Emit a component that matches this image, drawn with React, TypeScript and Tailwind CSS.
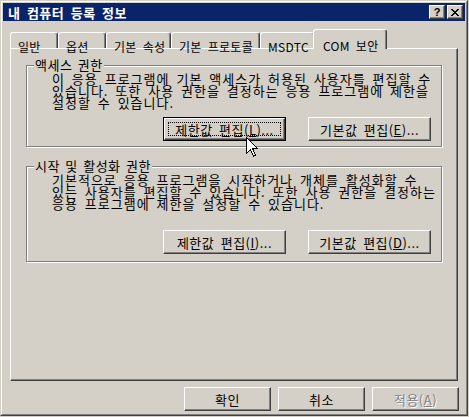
import React from "react";

// classic 3D raised button
const Btn: React.FC<{ children: React.ReactNode; className?: string; primary?: boolean; disabled?: boolean }> = ({
  children,
  className = "",
  primary,
  disabled,
}) => {
  const face = (
    <div className="relative flex h-full w-full items-center justify-center border-t border-l border-r border-b border-t-white border-l-white border-r-[#404040] border-b-[#404040] bg-[#d4d0c8] shadow-[inset_-1px_-1px_0_#808080]">
      <span
        className={
          disabled
            ? "text-[13px] leading-none tracking-[0.5px] text-[#808080] [text-shadow:1px_1px_0_#fff] [word-spacing:3px]"
            : "text-[13px] leading-none tracking-[0.5px] text-black [word-spacing:3px]"
        }
      >
        {children}
      </span>
      {primary && <div className="absolute inset-[3px] border border-dotted border-black" />}
    </div>
  );
  return <div className={`${className} ${primary ? "border border-black" : ""}`}>{face}</div>;
};

const Tab: React.FC<{ label: string; className: string; active?: boolean }> = ({ label, className, active }) => (
  <div
    className={
      active
        ? `${className} relative -ml-[2px] -mb-px h-[20px] rounded-t-[3px] border-t border-l border-r border-t-white border-l-white border-r-[#404040] bg-[#d4d0c8] pt-[2px] pl-[9px] shadow-[inset_-1px_0_0_#808080]`
        : `${className} h-[16px] rounded-t-[3px] border-t border-l border-r border-t-white border-l-white border-r-[#404040] bg-[#d4d0c8] pl-[7px] shadow-[inset_-1px_0_0_#808080]`
    }
  >
    <span className="whitespace-nowrap text-[12px] leading-[14px] tracking-[0.3px] text-black [word-spacing:3px]">{label}</span>
  </div>
);

const GroupBox: React.FC<{ title: string; className: string; children: React.ReactNode }> = ({
  title,
  className,
  children,
}) => (
  <div className={`${className} relative border border-[#808080] shadow-[inset_1px_1px_0_#fff,1px_1px_0_#fff]`}>
    <span className="absolute -top-[8px] left-[7px] bg-[#d4d0c8] px-[1px] text-[13px] leading-[14px] tracking-[0.5px] text-black [word-spacing:2px]">
      {title}
    </span>
    {children}
  </div>
);

export default function App() {
  return (
    <div className="relative h-[417px] w-[469px] bg-[#d4d0c8] font-['Noto_Sans_CJK_KR',sans-serif]">
      <div className="h-[416px] w-[468px] border border-t-[#d4d0c8] border-l-[#d4d0c8] border-r-[#404040] border-b-[#404040]">
        <div className="flex h-full flex-col border border-t-white border-l-white border-r-[#808080] border-b-[#808080] p-px">
          {/* Title bar */}
          <div className="flex h-[18px] shrink-0 items-center bg-[#0a246a] pl-[5px] pr-[2px]">
            <span className="text-[13px] font-bold leading-none tracking-[0.5px] text-white [word-spacing:3px]">내 컴퓨터 등록 정보</span>
            <div className="ml-auto flex gap-[2px]">
              <div className="flex h-[14px] w-[16px] items-center justify-center border-t border-l border-r border-b border-t-white border-l-white border-r-[#404040] border-b-[#404040] bg-[#d4d0c8] shadow-[inset_-1px_-1px_0_#808080]">
                <span className="font-['Liberation_Sans',sans-serif] text-[11px] font-bold leading-none text-black">?</span>
              </div>
              <div className="flex h-[14px] w-[16px] items-center justify-center border-t border-l border-r border-b border-t-white border-l-white border-r-[#404040] border-b-[#404040] bg-[#d4d0c8] shadow-[inset_-1px_-1px_0_#808080]">
                <svg width="8" height="7" viewBox="0 0 8 7" shapeRendering="crispEdges">
                  <path d="M0 0h2l2 2.5L6 0h2L5 3.5 8 7H6L4 4.5 2 7H0l3-3.5z" fill="#000" />
                </svg>
              </div>
            </div>
          </div>

          {/* Tabs */}
          <div className="relative z-10 mt-[8px] ml-[7px] flex h-[19px] items-end">
            <Tab label="일반" className="w-[48px]" />
            <Tab label="옵션" className="w-[48px]" />
            <Tab label="기본 속성" className="w-[65px]" />
            <Tab label="기본 프로토콜" className="w-[89px]" />
            <Tab label="MSDTC" className="w-[55px]" />
            <Tab label="COM 보안" className="w-[74px]" active />
          </div>

          {/* Tab panel */}
          <div className="mx-[7px] h-[333px] shrink-0 border-t border-l border-r border-b border-t-white border-l-white border-r-[#404040] border-b-[#404040] px-[15px] pt-[16px] shadow-[inset_-1px_-1px_0_#808080]">
            <GroupBox title="액세스 권한" className="h-[82px]">
              <div className="pl-[25px] pt-[7px] text-[13px] leading-[12px] tracking-[1px] whitespace-nowrap text-black [word-spacing:3px]">
                <div>이 응용 프로그램에 기본 액세스가 허용된 사용자를 편집할 수</div>
                <div>있습니다. 또한 사용 권한을 결정하는 응용 프로그램에 제한을</div>
                <div>설정할 수 있습니다.</div>
              </div>
              <div className="mt-[8px] flex justify-end gap-[22px] pr-[10px]">
                <Btn className="h-[24px] w-[123px]" primary>
                  제한값 편집(<u>L</u>)...
                </Btn>
                <Btn className="h-[24px] w-[123px]">
                  기본값 편집(<u>E</u>)...
                </Btn>
              </div>
            </GroupBox>

            <GroupBox title="시작 및 활성화 권한" className="mt-[19px] h-[96px]">
              <div className="pl-[25px] pt-[7px] text-[13px] leading-[12px] tracking-[1px] whitespace-nowrap text-black [word-spacing:3px]">
                <div>기본적으로 응용 프로그램을 시작하거나 개체를 활성화할 수</div>
                <div>있는 사용자를 편집할 수 있습니다. 또한 사용 권한을 결정하는</div>
                <div>응용 프로그램에 제한을 설정할 수 있습니다.</div>
              </div>
              <div className="mt-[20px] flex justify-end gap-[22px] pr-[10px]">
                <Btn className="h-[24px] w-[123px]">
                  제한값 편집(<u>I</u>)...
                </Btn>
                <Btn className="h-[24px] w-[123px]">
                  기본값 편집(<u>D</u>)...
                </Btn>
              </div>
            </GroupBox>
          </div>

          {/* Dialog buttons */}
          <div className="mt-[6px] flex justify-end gap-[7px] pr-[6px]">
            <Btn className="h-[24px] w-[87px]">확인</Btn>
            <Btn className="h-[24px] w-[87px]">취소</Btn>
            <Btn className="h-[24px] w-[87px]" disabled>
              적용(<u>A</u>)
            </Btn>
          </div>
        </div>
      </div>

      {/* mouse pointer */}
      <svg className="absolute left-[246px] top-[137px] z-20" width="13" height="20" viewBox="0 0 13 20" shapeRendering="crispEdges">
        <path d="M0.5 0.5V16.5L4.5 12.5L7.5 19L9.5 18L6.5 11.5H11.5Z" fill="#fff" stroke="#000" strokeWidth="1" />
      </svg>
    </div>
  );
}
